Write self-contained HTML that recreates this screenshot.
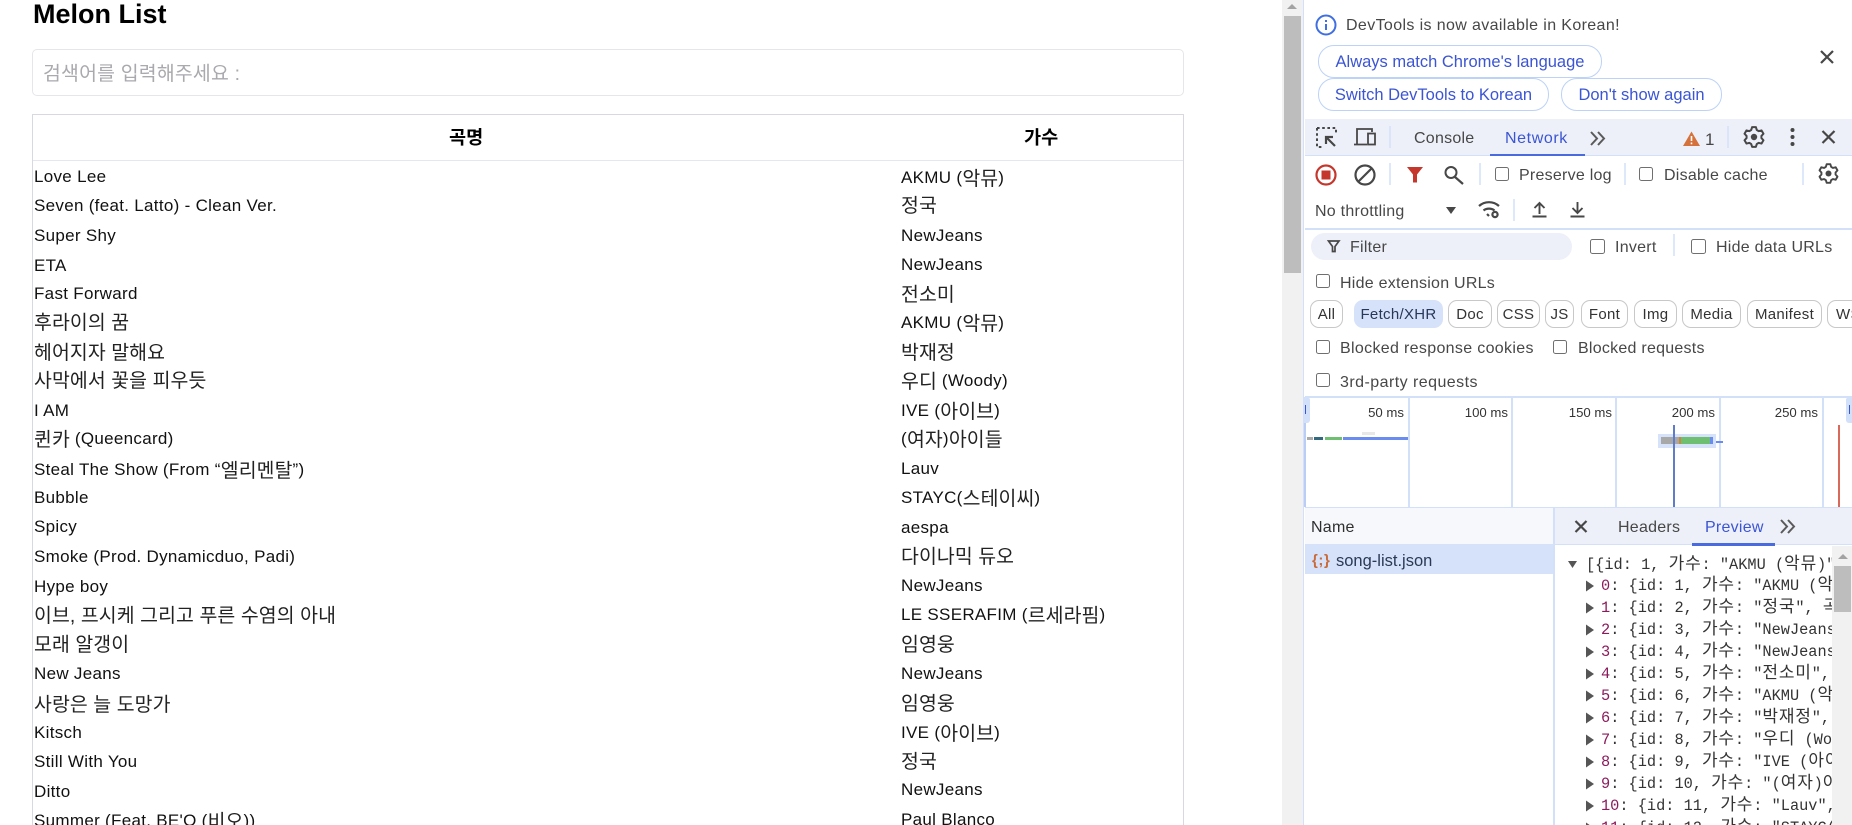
<!DOCTYPE html>
<html lang="ko">
<head>
<meta charset="utf-8">
<title>Melon List</title>
<style>
html,body{margin:0;padding:0;width:1852px;height:825px;overflow:hidden;background:#fff}
body{position:relative;font-family:"Liberation Sans","Noto Sans CJK KR",sans-serif;color:#000}
.a{position:absolute;box-sizing:border-box}
.t{position:absolute;white-space:nowrap;line-height:24px;height:24px}
.s{font-size:17px;color:#111;letter-spacing:.3px;margin-left:-1px}
.s .k,.k{font-size:19.4px;letter-spacing:.1px;color:#222;position:relative;top:1.5px}
.d{font-size:16px;color:#474747;letter-spacing:.25px;margin-top:1px}
.b{position:absolute;box-sizing:border-box;border:1px solid #bcd2f8;border-radius:16px;height:33px;line-height:33px;color:#3b55d3;font-size:16.5px;text-align:center;white-space:nowrap;background:#fff}
.c{position:absolute;box-sizing:border-box;width:14px;height:14px;border:1.5px solid #6f6f6f;border-radius:2.5px;background:#fff}
.chip{position:absolute;box-sizing:border-box;top:300px;height:28px;line-height:28px;border:1px solid #c8c8c8;border-radius:9px;font-size:15px;letter-spacing:.3px;color:#333;text-align:center;background:#fff;white-space:nowrap;overflow:hidden}
.ms{position:absolute;top:401px;font-size:13.2px;line-height:24px;color:#333;text-align:right;width:60px;white-space:nowrap}
.g{position:absolute;top:397px;width:1.5px;height:110px;background:#d3e0fa}
.tr{position:absolute;left:0;height:22px;line-height:22px;white-space:pre;font-family:"Liberation Mono","Noto Sans CJK KR",monospace;font-size:15.3px;color:#333}
.tr i{font-style:normal;color:#8a1c5c}
.tr b{font-weight:400;font-family:"Noto Sans CJK KR",sans-serif;font-size:17px;letter-spacing:.8px}
</style>
</head>
<body>

<!-- Page -->
<div class="t" style="left:33px;top:0;line-height:28px;height:28px;font-size:27px;font-weight:700">Melon List</div>
<div class="a" style="left:32px;top:49px;width:1152px;height:47px;border:1px solid #e6e6ea;border-radius:5px"></div>
<div class="t" style="left:43px;top:62px;color:#a9a9ae;font-size:19.4px;letter-spacing:.2px">검색어를 입력해주세요 :</div>

<div class="a" style="left:32px;top:114px;width:1152px;height:720px;border:1px solid #d8d8e0;border-bottom:0"></div>
<div class="a" style="left:33px;top:160px;width:1150px;height:1px;background:#e6e6f0"></div>
<div class="t" style="left:449px;top:126px;font-size:18.6px;font-weight:700">곡명</div>
<div class="t" style="left:1024px;top:126px;font-size:18.6px;font-weight:700">가수</div>

<div class="t s" style="left:35px;top:165px">Love Lee</div>
<div class="t s" style="left:35px;top:194px">Seven (feat. Latto) - Clean Ver.</div>
<div class="t s" style="left:35px;top:224px">Super Shy</div>
<div class="t s" style="left:35px;top:254px">ETA</div>
<div class="t s" style="left:35px;top:282px">Fast Forward</div>
<div class="t s" style="left:35px;top:309px"><span class="k">후라이의 꿈</span></div>
<div class="t s" style="left:35px;top:339px"><span class="k">헤어지자 말해요</span></div>
<div class="t s" style="left:35px;top:367px"><span class="k">사막에서 꽃을 피우듯</span></div>
<div class="t s" style="left:35px;top:399px">I AM</div>
<div class="t s" style="left:35px;top:426px"><span class="k">퀸카</span> (Queencard)</div>
<div class="t s" style="left:35px;top:457px">Steal The Show (From “<span class="k">엘리멘탈</span>”)</div>
<div class="t s" style="left:35px;top:486px">Bubble</div>
<div class="t s" style="left:35px;top:515px">Spicy</div>
<div class="t s" style="left:35px;top:545px">Smoke (Prod. Dynamicduo, Padi)</div>
<div class="t s" style="left:35px;top:575px">Hype boy</div>
<div class="t s" style="left:35px;top:602px"><span class="k">이브, 프시케 그리고 푸른 수염의 아내</span></div>
<div class="t s" style="left:35px;top:631px"><span class="k">모래 알갱이</span></div>
<div class="t s" style="left:35px;top:662px">New Jeans</div>
<div class="t s" style="left:35px;top:691px"><span class="k">사랑은 늘 도망가</span></div>
<div class="t s" style="left:35px;top:721px">Kitsch</div>
<div class="t s" style="left:35px;top:750px">Still With You</div>
<div class="t s" style="left:35px;top:780px">Ditto</div>
<div class="t s" style="left:35px;top:808px">Summer (Feat. BE'O (<span class="k">비오</span>))</div>

<div class="t s" style="left:902px;top:165px">AKMU (<span class="k">악뮤</span>)</div>
<div class="t s" style="left:902px;top:192px"><span class="k">정국</span></div>
<div class="t s" style="left:902px;top:224px">NewJeans</div>
<div class="t s" style="left:902px;top:253px">NewJeans</div>
<div class="t s" style="left:902px;top:281px"><span class="k">전소미</span></div>
<div class="t s" style="left:902px;top:310px">AKMU (<span class="k">악뮤</span>)</div>
<div class="t s" style="left:902px;top:339px"><span class="k">박재정</span></div>
<div class="t s" style="left:902px;top:368px"><span class="k">우디</span> (Woody)</div>
<div class="t s" style="left:902px;top:398px">IVE (<span class="k">아이브</span>)</div>
<div class="t s" style="left:902px;top:426px">(<span class="k">여자</span>)<span class="k">아이들</span></div>
<div class="t s" style="left:902px;top:457px">Lauv</div>
<div class="t s" style="left:902px;top:485px">STAYC(<span class="k">스테이씨</span>)</div>
<div class="t s" style="left:902px;top:516px">aespa</div>
<div class="t s" style="left:902px;top:543px"><span class="k">다이나믹 듀오</span></div>
<div class="t s" style="left:902px;top:574px">NewJeans</div>
<div class="t s" style="left:902px;top:602px">LE SSERAFIM (<span class="k">르세라핌</span>)</div>
<div class="t s" style="left:902px;top:631px"><span class="k">임영웅</span></div>
<div class="t s" style="left:902px;top:662px">NewJeans</div>
<div class="t s" style="left:902px;top:690px"><span class="k">임영웅</span></div>
<div class="t s" style="left:902px;top:720px">IVE (<span class="k">아이브</span>)</div>
<div class="t s" style="left:902px;top:748px"><span class="k">정국</span></div>
<div class="t s" style="left:902px;top:778px">NewJeans</div>
<div class="t s" style="left:902px;top:808px">Paul Blanco</div>

<!-- page scrollbar -->
<div class="a" style="left:1282px;top:0;width:22px;height:825px;background:#f1f1f1"></div>
<div class="a" style="left:1284px;top:16px;width:17px;height:257px;background:#bdbdbd"></div>

<!-- DevTools panels -->
<div class="a" style="left:1303px;top:0;width:549px;height:825px;background:#fff;border-left:1.5px solid #d3e0fa"></div>

<div class="t d" style="left:1346px;top:13px;letter-spacing:.37px">DevTools is now available in Korean!</div>
<div class="b" style="left:1318px;top:45px;width:284px">Always match Chrome's language</div>
<div class="b" style="left:1318px;top:78px;width:231px">Switch DevTools to Korean</div>
<div class="b" style="left:1561px;top:78px;width:161px">Don't show again</div>

<div class="a" style="left:1305px;top:119px;width:547px;height:37px;background:#edf0f9;border-bottom:1.5px solid #d3e0fa"></div>
<div class="t d" style="left:1414px;top:126px">Console</div>
<div class="t d" style="left:1505px;top:126px;color:#3b55d3;letter-spacing:.6px">Network</div>
<div class="a" style="left:1490px;top:154px;width:95px;height:2px;background:#4a6ae0"></div>
<div class="t d" style="left:1705px;top:127px;font-size:17px">1</div>

<div class="c" style="left:1495px;top:167px"></div>
<div class="t d" style="left:1519px;top:163px">Preserve log</div>
<div class="c" style="left:1639px;top:167px"></div>
<div class="t d" style="left:1664px;top:163px">Disable cache</div>

<div class="t d" style="left:1315px;top:199px">No throttling</div>
<div class="a" style="left:1305px;top:228px;width:547px;height:1.5px;background:#d3e0fa"></div>

<div class="a" style="left:1311px;top:233px;width:261px;height:27px;background:#edf0f9;border-radius:14px"></div>
<div class="t d" style="left:1350px;top:235px">Filter</div>
<div class="c" style="left:1590px;top:239px;width:15px;height:15px"></div>
<div class="t d" style="left:1615px;top:235px">Invert</div>
<div class="c" style="left:1691px;top:239px;width:15px;height:15px"></div>
<div class="t d" style="left:1716px;top:235px">Hide data URLs</div>

<div class="c" style="left:1316px;top:274px"></div>
<div class="t d" style="left:1340px;top:271px">Hide extension URLs</div>

<div class="chip" style="left:1310px;width:33px">All</div>
<div class="chip" style="left:1354px;width:89px;background:#d6e2f9;border-color:#d6e2f9;color:#28385a">Fetch/XHR</div>
<div class="chip" style="left:1448px;width:44px">Doc</div>
<div class="chip" style="left:1497px;width:43px">CSS</div>
<div class="chip" style="left:1545px;width:29px">JS</div>
<div class="chip" style="left:1581px;width:47px">Font</div>
<div class="chip" style="left:1634px;width:43px">Img</div>
<div class="chip" style="left:1682px;width:59px">Media</div>
<div class="chip" style="left:1747px;width:75px">Manifest</div>
<div class="chip" style="left:1827px;width:40px;text-align:left;padding-left:8px">WS</div>

<div class="c" style="left:1316px;top:340px"></div>
<div class="t d" style="left:1340px;top:336px;letter-spacing:.33px">Blocked response cookies</div>
<div class="c" style="left:1553px;top:340px"></div>
<div class="t d" style="left:1578px;top:336px">Blocked requests</div>
<div class="c" style="left:1316px;top:373px"></div>
<div class="t d" style="left:1340px;top:370px;letter-spacing:.45px">3rd-party requests</div>

<!-- Overview -->
<div class="a" style="left:1305px;top:396px;width:547px;height:1.5px;background:#d3e0fa"></div>
<div class="a" style="left:1304px;top:397px;width:2px;height:110px;background:#b9cdf6"></div>
<div class="g" style="left:1408px"></div>
<div class="g" style="left:1511px"></div>
<div class="g" style="left:1615px"></div>
<div class="g" style="left:1719px"></div>
<div class="g" style="left:1822px"></div>
<div class="ms" style="left:1344px">50 ms</div>
<div class="ms" style="left:1448px">100 ms</div>
<div class="ms" style="left:1552px">150 ms</div>
<div class="ms" style="left:1655px">200 ms</div>
<div class="ms" style="left:1758px">250 ms</div>
<div class="a" style="left:1304px;top:397px;width:6px;height:26px;background:#d3e0fa;border-radius:0 3px 3px 0"></div>
<div class="a" style="left:1305px;top:405px;width:1px;height:9px;background:#3b55d3"></div>
<div class="a" style="left:1846px;top:397px;width:6px;height:26px;background:#d3e0fa;border-radius:3px 0 0 3px"></div>
<div class="a" style="left:1849px;top:405px;width:1px;height:9px;background:#3b55d3"></div>

<div class="a" style="left:1307px;top:437px;width:6px;height:3px;background:#aaa"></div>
<div class="a" style="left:1314px;top:437px;width:9px;height:3px;background:#33697f"></div>
<div class="a" style="left:1325px;top:437px;width:17px;height:3px;background:#6fbf73"></div>
<div class="a" style="left:1343px;top:437px;width:65px;height:3px;background:#6a8cf0"></div>
<div class="a" style="left:1362px;top:432px;width:13px;height:3px;background:#e8e8e8"></div>
<div class="a" style="left:1658px;top:434px;width:58px;height:14px;background:#d6e2f9"></div>
<div class="a" style="left:1661px;top:437px;width:18px;height:7px;background:#a8a8a8"></div>
<div class="a" style="left:1679px;top:437px;width:2px;height:7px;background:#c98a3a"></div>
<div class="a" style="left:1681px;top:437px;width:29px;height:7px;background:#6fbf73"></div>
<div class="a" style="left:1710px;top:437px;width:3px;height:7px;background:#6a8cf0"></div>
<div class="a" style="left:1716px;top:441px;width:7px;height:2px;background:#6a8cf0"></div>
<div class="a" style="left:1673px;top:425px;width:2px;height:82px;background:#5f7cc9"></div>
<div class="a" style="left:1838px;top:425px;width:1.5px;height:82px;background:#d96a5a"></div>

<!-- Name / preview -->
<div class="a" style="left:1305px;top:507px;width:547px;height:1.5px;background:#d3e0fa"></div>
<div class="a" style="left:1305px;top:508px;width:248px;height:36px;background:#f7f8fc"></div>
<div class="t d" style="left:1311px;top:515px;color:#2f2f2f">Name</div>
<div class="a" style="left:1305px;top:544px;width:248px;height:30px;background:#d6e2f9"></div>
<div class="t" style="left:1312px;top:549px;font-size:15px;font-weight:700;color:#c96a38;letter-spacing:.6px">{;}</div>
<div class="t" style="left:1336px;top:549px;font-size:16.5px;color:#2b3a55">song-list.json</div>
<div class="a" style="left:1553px;top:508px;width:1.5px;height:317px;background:#d3e0fa"></div>
<div class="a" style="left:1555px;top:508px;width:297px;height:36px;background:#edf0f9"></div>
<div class="a" style="left:1555px;top:544px;width:297px;height:1px;background:#d3e0fa"></div>
<div class="t d" style="left:1618px;top:515px">Headers</div>
<div class="t d" style="left:1705px;top:515px;color:#3b55d3">Preview</div>
<div class="a" style="left:1692px;top:543px;width:83px;height:3px;background:#4a6ae0"></div>

<div class="a" style="left:1555px;top:546px;width:277px;height:279px;overflow:hidden">
<div class="tr" style="left:31px;top:5px">[{id: 1, <b>가수</b>: "AKMU (<b>악뮤</b>)", <b>곡명</b></div>
<div class="tr" style="left:46px;top:25.500px"><i>0</i>: {id: 1, <b>가수</b>: "AKMU (<b>악뮤</b>)",</div>
<div class="tr" style="left:46px;top:47.500px"><i>1</i>: {id: 2, <b>가수</b>: "<b>정국</b>", <b>곡명</b></div>
<div class="tr" style="left:46px;top:69.500px"><i>2</i>: {id: 3, <b>가수</b>: "NewJeans",</div>
<div class="tr" style="left:46px;top:91.500px"><i>3</i>: {id: 4, <b>가수</b>: "NewJeans",</div>
<div class="tr" style="left:46px;top:113.500px"><i>4</i>: {id: 5, <b>가수</b>: "<b>전소미</b>", <b>곡</b></div>
<div class="tr" style="left:46px;top:135.500px"><i>5</i>: {id: 6, <b>가수</b>: "AKMU (<b>악뮤</b>)",</div>
<div class="tr" style="left:46px;top:157.500px"><i>6</i>: {id: 7, <b>가수</b>: "<b>박재정</b>", <b>곡</b></div>
<div class="tr" style="left:46px;top:179.500px"><i>7</i>: {id: 8, <b>가수</b>: "<b>우디</b> (Woody)",</div>
<div class="tr" style="left:46px;top:201.500px"><i>8</i>: {id: 9, <b>가수</b>: "IVE (<b>아이브</b>)",</div>
<div class="tr" style="left:46px;top:223.500px"><i>9</i>: {id: 10, <b>가수</b>: "(<b>여자</b>)<b>아이들</b>",</div>
<div class="tr" style="left:46px;top:245.500px"><i>10</i>: {id: 11, <b>가수</b>: "Lauv", <b>곡</b></div>
<div class="tr" style="left:46px;top:267.500px"><i>11</i>: {id: 12, <b>가수</b>: "STAYC(</div>
</div>
<div class="a" style="left:1832px;top:546px;width:20px;height:279px;background:#f1f1f1"></div>
<div class="a" style="left:1834px;top:566px;width:17px;height:46px;background:#bdbdbd"></div>

<!-- Icons -->
<svg class="a" style="left:0;top:0" width="1852" height="825" viewBox="0 0 1852 825" fill="none" stroke="#474747" stroke-width="2">
<defs>
<path id="gear" d="M-2.81-6.95L-1.91-9.82L1.91-9.82L2.81-6.95L4.62-5.91L7.55-6.56L9.46-3.26L7.43-1.04L7.43 1.04L9.46 3.26L7.55 6.56L4.62 5.91L2.81 6.95L1.91 9.82L-1.91 9.82L-2.81 6.95L-4.62 5.91L-7.55 6.56L-9.46 3.26L-7.43 1.04L-7.43-1.04L-9.46-3.26L-7.55-6.56L-4.62-5.91Z" stroke-linejoin="round"/>
</defs>
<!-- page scrollbar arrow -->
<path d="M1292 4l5 5h-10z" fill="#a3a3a3" stroke="none"/>
<!-- info -->
<circle cx="1326" cy="25" r="9.500" stroke="#3f6fe0" stroke-width="2"/>
<path d="M1326 24v6M1326 20v2" stroke="#3f6fe0" stroke-width="2"/>
<!-- infobar close -->
<path d="M1821 51l12 12M1833 51l-12 12" stroke-width="2.200"/>
<!-- inspect -->
<path d="M1317 128h19v7M1317 128v19h7" stroke-dasharray="2.600 2.600" stroke-width="2"/>
<path d="M1335 146l-9-9M1326 144v-7h7" stroke-width="2.200"/>
<!-- device -->
<path d="M1354 144.500h13M1357 144v-15h15v3" stroke-width="1.800"/>
<rect x="1368" y="133.500" width="7" height="11" stroke-width="1.800"/>
<!-- dividers -->
<path d="M1390 126v22M1728 126v22M1390 163v22M1480 163v22M1625 163v22M1803 163v22M1514 199v22M1674 234v22" stroke="#d3e0fa" stroke-width="1.500"/>
<!-- >> tabs -->
<path d="M1591 132l6 6.500-6 6.500M1598 132l6 6.500-6 6.500" stroke="#5a5a5a"/>
<!-- warning -->
<path d="M1691.500 131.500l8.500 14.500h-17z" fill="#d5713a" stroke="none"/>
<path d="M1691.500 136v5M1691.500 142.500v1.800" stroke="#fff" stroke-width="1.600"/>
<!-- gear toolbar -->
<use href="#gear" transform="translate(1754 137)"/>
<circle cx="1754" cy="137" r="3.200" fill="#474747" stroke="none"/>
<!-- kebab -->
<circle cx="1792.500" cy="130" r="2" fill="#474747" stroke="none"/>
<circle cx="1792.500" cy="137" r="2" fill="#474747" stroke="none"/>
<circle cx="1792.500" cy="144" r="2" fill="#474747" stroke="none"/>
<!-- toolbar close -->
<path d="M1822.500 131l12 12M1834.500 131l-12 12" stroke-width="2.200"/>
<!-- record -->
<circle cx="1326" cy="175" r="9.500" stroke="#c5372c" stroke-width="2.200"/>
<rect x="1321.500" y="170.500" width="9" height="9" fill="#c5372c" stroke="none"/>
<!-- clear -->
<circle cx="1365" cy="175" r="9.500" stroke-width="2.200"/>
<path d="M1358.500 181.500l13-13" stroke-width="2.200"/>
<!-- funnel -->
<path d="M1407 167h16l-6 7.500v8h-4v-8z" fill="#c5372c" stroke="none"/>
<!-- search -->
<circle cx="1451" cy="172.500" r="5.500" stroke-width="2"/>
<path d="M1455 177l8 7" stroke-width="2.200"/>
<!-- gear row 2 -->
<use href="#gear" transform="translate(1828.500 173.500) scale(.95)"/>
<circle cx="1828.500" cy="173.500" r="3" fill="#474747" stroke="none"/>
<!-- throttle -->
<path d="M1446 207h10l-5 7z" fill="#474747" stroke="none"/>
<path d="M1479 206a15 15 0 0 1 20 0M1483.500 210.500a9 9 0 0 1 11 0" stroke-width="2.200"/>
<path d="M1487 214l2 2" stroke-width="2.200"/>
<circle cx="1495" cy="214.500" r="2.600" stroke-width="2.200"/>
<!-- upload/download -->
<path d="M1539.500 203v11M1534.500 208l5-5 5 5M1532.500 216.500h14" stroke-width="1.900"/>
<path d="M1577.500 202v11M1572.500 208l5 5 5-5M1570.500 216.500h14" stroke-width="1.900"/>
<!-- filter outline -->
<path d="M1328.500 241h10.500l-4 5.500v5h-2.500v-5z" stroke-width="1.700"/>
<!-- details close and more -->
<path d="M1575.500 521l11 11M1586.500 521l-11 11" stroke-width="2.200"/>
<path d="M1781 520l6 6.500-6 6.500M1788 520l6 6.500-6 6.500" stroke="#5a5a5a"/>
<!-- tree triangles -->
<path d="M1568 561h9l-4.500 7z" fill="#555" stroke="none"/>
<path d="M1586 580.500l8 5.500-8 5.500zM1586 602.500l8 5.500-8 5.500zM1586 624.500l8 5.500-8 5.500zM1586 646.500l8 5.500-8 5.500zM1586 668.500l8 5.500-8 5.500zM1586 690.500l8 5.500-8 5.500zM1586 712.500l8 5.500-8 5.500zM1586 734.500l8 5.500-8 5.500zM1586 756.500l8 5.500-8 5.500zM1586 778.500l8 5.500-8 5.500zM1586 800.500l8 5.500-8 5.500zM1586 822.500l8 5.500-8 5.500z" fill="#555" stroke="none"/>
<!-- preview scrollbar arrow -->
<path d="M1843 554l5 5h-10z" fill="#a3a3a3" stroke="none"/>
</svg>

</body>
</html>
